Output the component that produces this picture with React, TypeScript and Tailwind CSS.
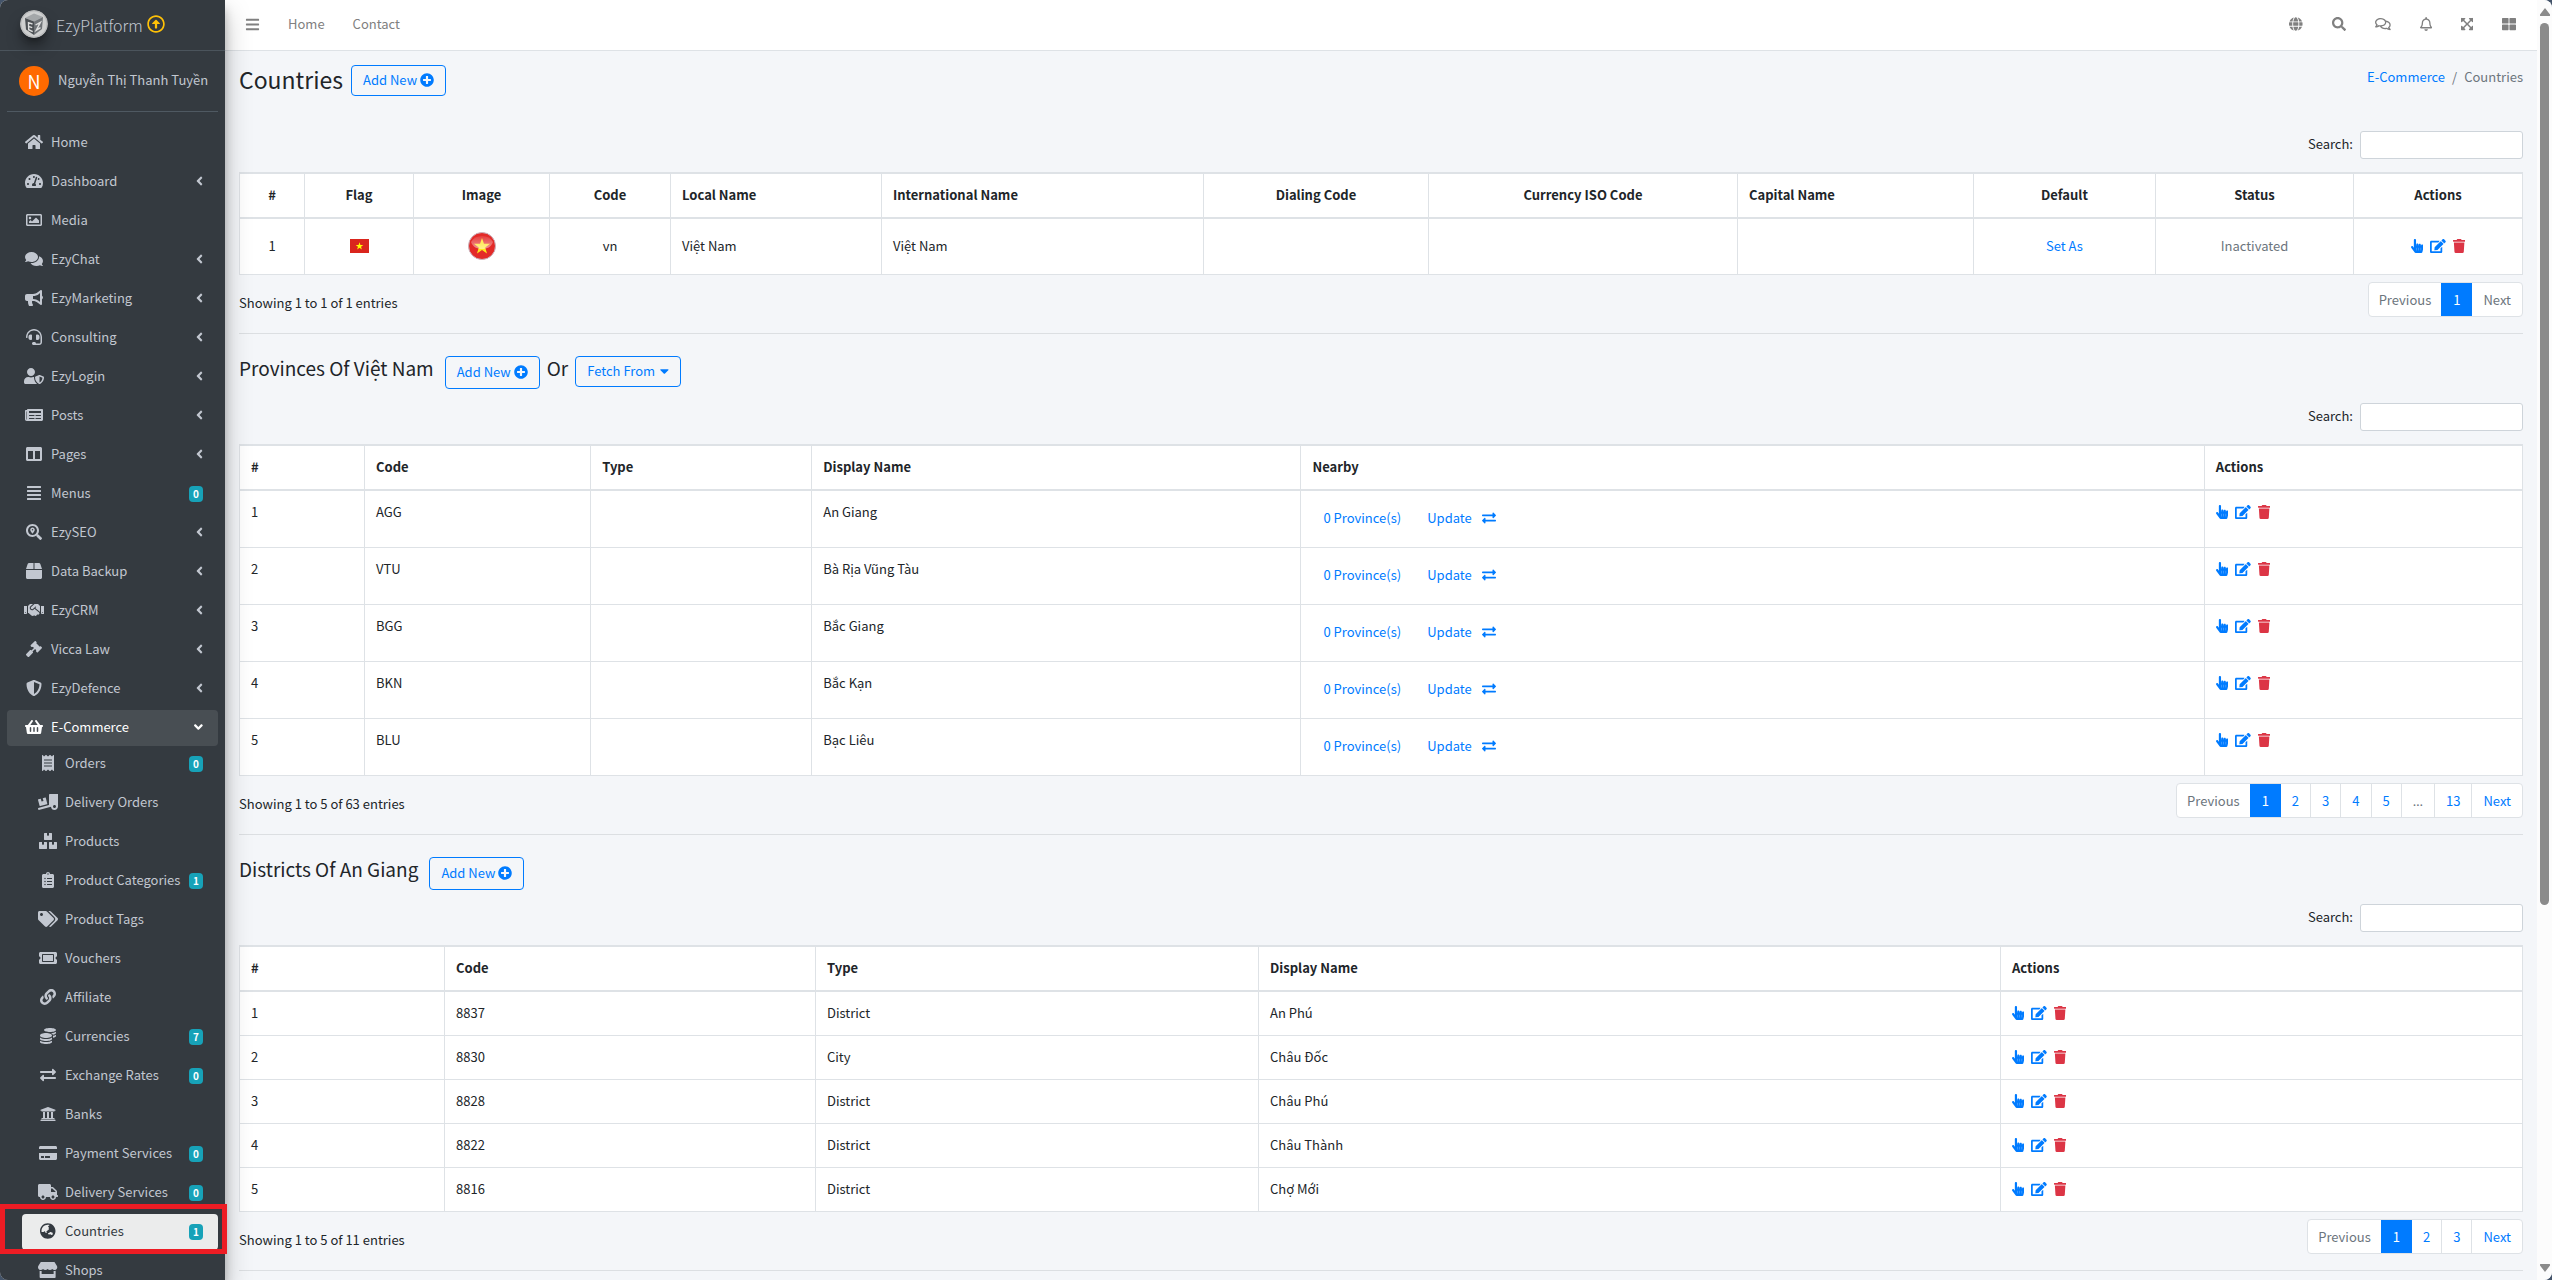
import { ReactNode } from "react";
import { IconType } from "react-icons";
import {
  FaAlignJustify,
  FaAngleDown,
  FaAngleLeft,
  FaBars,
  FaBox,
  FaBoxes,
  FaBullhorn,
  FaCaretDown,
  FaClipboardList,
  FaCoins,
  FaColumns,
  FaComments,
  FaCreditCard,
  FaEdit,
  FaExchangeAlt,
  FaExpandArrowsAlt,
  FaGavel,
  FaGlobe,
  FaGlobeAsia,
  FaHandPointer,
  FaHandshake,
  FaHeadset,
  FaHome,
  FaLink,
  FaNewspaper,
  FaPlusCircle,
  FaReceipt,
  FaRegArrowAltCircleUp,
  FaRegBell,
  FaRegComments,
  FaRegImage,
  FaSearch,
  FaSearchLocation,
  FaShieldAlt,
  FaShoppingBasket,
  FaStore,
  FaTachometerAlt,
  FaTags,
  FaThLarge,
  FaTicketAlt,
  FaTrash,
  FaTruck,
  FaTruckLoading,
  FaUniversity,
  FaUserShield,
} from "react-icons/fa";

type MenuItem = {
  label: string;
  icon: IconType;
  badge?: number;
  tree?: boolean;
  active?: boolean;
};

const menu: MenuItem[] = [
  { label: "Home", icon: FaHome },
  { label: "Dashboard", icon: FaTachometerAlt, tree: true },
  { label: "Media", icon: FaRegImage },
  { label: "EzyChat", icon: FaComments, tree: true },
  { label: "EzyMarketing", icon: FaBullhorn, tree: true },
  { label: "Consulting", icon: FaHeadset, tree: true },
  { label: "EzyLogin", icon: FaUserShield, tree: true },
  { label: "Posts", icon: FaNewspaper, tree: true },
  { label: "Pages", icon: FaColumns, tree: true },
  { label: "Menus", icon: FaAlignJustify, badge: 0 },
  { label: "EzySEO", icon: FaSearchLocation, tree: true },
  { label: "Data Backup", icon: FaBox, tree: true },
  { label: "EzyCRM", icon: FaHandshake, tree: true },
  { label: "Vicca Law", icon: FaGavel, tree: true },
  { label: "EzyDefence", icon: FaShieldAlt, tree: true },
  { label: "E-Commerce", icon: FaShoppingBasket, tree: true, active: true },
];

const subMenu: MenuItem[] = [
  { label: "Orders", icon: FaReceipt, badge: 0 },
  { label: "Delivery Orders", icon: FaTruckLoading },
  { label: "Products", icon: FaBoxes },
  { label: "Product Categories", icon: FaClipboardList, badge: 1 },
  { label: "Product Tags", icon: FaTags },
  { label: "Vouchers", icon: FaTicketAlt },
  { label: "Affiliate", icon: FaLink },
  { label: "Currencies", icon: FaCoins, badge: 7 },
  { label: "Exchange Rates", icon: FaExchangeAlt, badge: 0 },
  { label: "Banks", icon: FaUniversity },
  { label: "Payment Services", icon: FaCreditCard, badge: 0 },
  { label: "Delivery Services", icon: FaTruck, badge: 0 },
  { label: "Countries", icon: FaGlobeAsia, badge: 1, active: true },
  { label: "Shops", icon: FaStore },
];

const provinces = [
  ["AGG", "An Giang"],
  ["VTU", "Bà Rịa Vũng Tàu"],
  ["BGG", "Bắc Giang"],
  ["BKN", "Bắc Kạn"],
  ["BLU", "Bạc Liêu"],
];

const districts = [
  ["8837", "District", "An Phú"],
  ["8830", "City", "Châu Đốc"],
  ["8828", "District", "Châu Phú"],
  ["8822", "District", "Châu Thành"],
  ["8816", "District", "Chợ Mới"],
];

// size="100%" lets the width follow each icon's own viewBox
const Fa = ({ icon: Icon, className = "h-3.5" }: { icon: IconType; className?: string }) => (
  <Icon size="100%" className={`w-auto shrink-0 ${className}`} />
);

const Badge = ({ value }: { value: number }) => (
  <span className="mt-0.5 flex h-4 w-[14px] items-center justify-center rounded bg-[#17a2b8] text-[10px] font-bold text-white">
    {value}
  </span>
);

const NavLink = ({ item }: { item: MenuItem }) => (
  <a
    href="#"
    className={`flex h-9 items-center rounded px-[15px] pb-0.5 ${
      item.active ? "bg-white/10 text-white" : ""
    }`}
  >
    <span className="flex w-6 justify-center">
      <Fa icon={item.icon} className="h-4" />
    </span>
    <span className="ml-[5px] flex-1">{item.label}</span>
    {item.tree && <Fa icon={item.active ? FaAngleDown : FaAngleLeft} />}
    {item.badge !== undefined && <Badge value={item.badge} />}
  </a>
);

const SubNavLink = ({ item }: { item: MenuItem }) => (
  <a
    href="#"
    className={`relative flex h-9 items-center rounded pr-[15px] pb-0.5 pl-[14px] ${
      item.active ? "bg-[#ebecec] text-[#343a40]" : ""
    }`}
  >
    <span className="flex w-6 justify-center">
      <Fa icon={item.icon} className="h-4" />
    </span>
    <span className="ml-[5px] flex-1 whitespace-nowrap">{item.label}</span>
    {item.badge !== undefined && <Badge value={item.badge} />}
    {item.active && (
      <span className="pointer-events-none absolute -top-2.5 -right-[9px] -bottom-1 -left-[22px] z-10 border-[5px] border-[#ed1c24]" />
    )}
  </a>
);

const Logo = () => (
  <svg viewBox="0 0 28 28" className="size-7 rounded-full shadow-lg shadow-black/50">
    <circle cx="14" cy="14" r="14" fill="#b9babb" />
    <circle cx="14" cy="14" r="12.500" fill="#cfd0d0" />
    <path d="m5 8 9-4.500L23 7l-9 4.500z" fill="#a4a7a9" />
    <path d="m5 8 9 3.500V25l-8-5.500z" fill="#4b4f53" />
    <path d="m14 11.500 9-4.500-1 12-8 6z" fill="#6f7377" />
    <path
      d="m12.500 14-4-1.300.2 7 4 2M8.600 16.300l3.600 1.300M15.500 15l5-2.700-4.300 8 4.300-2.600"
      fill="none"
      stroke="#dcdddd"
      strokeWidth="1.400"
    />
  </svg>
);

const Sidebar = () => (
  <aside className="relative z-10 w-[225px] shrink-0 bg-[#343a40] text-[#c2c7d0] shadow-[0_13px_25px_rgba(0,0,0,0.25),0_9px_9px_rgba(0,0,0,0.22)]">
    <a
      href="#"
      className="flex h-[51px] items-center border-b border-[#4b545c] pb-0.5 pl-5 text-base"
    >
      <Logo />
      <span className="mt-0.5 ml-2 font-light">EzyPlatform</span>
      <FaRegArrowAltCircleUp size={18} className="ml-1 text-[#ffc107]" />
    </a>
    <div className="mx-[7px] flex h-[61px] items-center border-b border-[#4f5962] pl-3">
      <span className="flex size-[30px] items-center justify-center rounded-full bg-[#ff6a00] text-lg text-white">
        N
      </span>
      <a href="#" className="ml-[9px] pb-0.5 whitespace-nowrap">
        Nguyễn Thị Thanh Tuyền
      </a>
    </div>
    <nav className="mx-[7px] mt-[13px]">
      <ul className="flex flex-col gap-[3px]">
        {menu.map((item) => (
          <li key={item.label}>
            <NavLink item={item} />
          </li>
        ))}
      </ul>
      <ul className="ml-[15px] flex flex-col gap-[3px]">
        {subMenu.map((item) => (
          <li key={item.label}>
            <SubNavLink item={item} />
          </li>
        ))}
      </ul>
    </nav>
  </aside>
);

const Navbar = () => (
  <header className="flex h-[51px] shrink-0 items-center border-b border-[#dee2e6] bg-white pr-[21px] pb-0.5 pl-5 text-[#808080]">
    <button aria-label="Toggle menu">
      <FaBars size={15} />
    </button>
    <a href="#" className="ml-7">
      Home
    </a>
    <a href="#" className="ml-7">
      Contact
    </a>
    <div className="ml-auto flex items-center gap-[29px]">
      <button aria-label="Language">
        <Fa icon={FaGlobe} />
      </button>
      <button aria-label="Search">
        <Fa icon={FaSearch} />
      </button>
      <button aria-label="Messages">
        <Fa icon={FaRegComments} />
      </button>
      <button aria-label="Notifications">
        <Fa icon={FaRegBell} />
      </button>
      <button aria-label="Full screen">
        <Fa icon={FaExpandArrowsAlt} />
      </button>
      <button aria-label="Apps">
        <Fa icon={FaThLarge} />
      </button>
    </div>
  </header>
);

const OutlineButton = ({ children, tall }: { children: ReactNode; tall?: boolean }) => (
  <button
    className={`flex items-center gap-[3px] rounded border border-[#007bff] px-[11px] pb-0.5 text-[13px] text-[#007bff] ${
      tall ? "h-[33px]" : "h-[31px]"
    }`}
  >
    {children}
  </button>
);

const SearchBox = ({ id }: { id: string }) => (
  <div className="flex items-center justify-end gap-[7px]">
    <label htmlFor={id} className="pb-0.5">
      Search:
    </label>
    <input
      id={id}
      type="search"
      className="h-7 w-[163px] rounded-[3px] border border-[#ced4da] bg-white px-2"
    />
  </div>
);

const Cell = ({ children, center }: { children?: ReactNode; center?: boolean }) => (
  <td
    className={`border-r border-b border-[#dee2e6] px-[11px] ${
      center ? "pb-0.5 text-center align-middle" : "pt-2.5 align-top"
    }`}
  >
    {children}
  </td>
);

type Column = { label: string; width: number; center?: boolean };

const DataTable = ({ columns, children }: { columns: Column[]; children: ReactNode }) => {
  const total = columns.reduce((sum, c) => sum + c.width, 0);
  return (
    <table className="mt-[13px] w-full table-fixed border-separate border-spacing-0 border-t-2 border-l border-[#dee2e6] bg-white">
      <thead>
        <tr className="h-[45px]">
          {columns.map((c) => (
            <th
              key={c.label}
              style={{ width: `${(c.width / total) * 100}%` }}
              className={`border-r border-b-2 border-[#dee2e6] px-[11px] pb-0.5 font-bold ${
                c.center ? "text-center" : "text-left"
              }`}
            >
              {c.label}
            </th>
          ))}
        </tr>
      </thead>
      <tbody>{children}</tbody>
    </table>
  );
};

const Actions = ({ center }: { center?: boolean }) => (
  <div className={`flex h-[22px] items-center gap-[7px] text-[#007bff] ${center ? "justify-center" : ""}`}>
    <button aria-label="Select">
      <Fa icon={FaHandPointer} />
    </button>
    <button aria-label="Edit">
      <Fa icon={FaEdit} />
    </button>
    <button aria-label="Delete" className="text-[#dc3545]">
      <Fa icon={FaTrash} />
    </button>
  </div>
);

const TableFooter = ({
  info,
  pages,
  nextDisabled,
}: {
  info: string;
  pages: string[];
  nextDisabled?: boolean;
}) => (
  <div className="mt-[7px] flex items-start justify-between border-b border-[#dcdfe2] pb-4">
    <p className="mt-2.5">{info}</p>
    <div className="flex h-[35px] overflow-hidden rounded border border-[#dee2e6] bg-white text-[#007bff]">
      <button className="px-2.5 text-[#6c757d]">Previous</button>
      {pages.map((p, i) => (
        <button
          key={p}
          className={
            i === 0
              ? "-my-px bg-[#007bff] px-3 text-white"
              : `border-r border-[#dee2e6] px-[11px] ${
                  p === "…" ? "font-['Noto_Sans',sans-serif] text-[#6c757d]" : ""
                }`
          }
        >
          {p}
        </button>
      ))}
      <button className={`px-[11px] ${nextDisabled ? "text-[#6c757d]" : ""}`}>Next</button>
    </div>
  </div>
);

const Scrollbar = () => (
  <div className="flex w-[15px] shrink-0 flex-col items-center justify-between bg-[#fcfcfc] py-2 text-[#8b8b8b]">
    <svg viewBox="0 0 10 8" className="h-2 w-2.5 fill-current">
      <path d="M5 0 10 6.500a.9.900 0 0 1-.7 1.500H.7A.9.900 0 0 1 0 6.500z" />
    </svg>
    <div className="my-[7px] flex w-[9px] flex-1 flex-col">
      <div className="h-[71.500%] rounded-full bg-[#8b8b8b]" />
    </div>
    <svg viewBox="0 0 10 8" className="h-2 w-2.5 fill-current">
      <path d="M5 8 0 1.500A.9.900 0 0 1 .7 0h8.600A.9.900 0 0 1 10 1.500z" />
    </svg>
  </div>
);

const countryColumns: Column[] = [
  { label: "#", width: 65, center: true },
  { label: "Flag", width: 109, center: true },
  { label: "Image", width: 136, center: true },
  { label: "Code", width: 121, center: true },
  { label: "Local Name", width: 211 },
  { label: "International Name", width: 322 },
  { label: "Dialing Code", width: 225, center: true },
  { label: "Currency ISO Code", width: 309, center: true },
  { label: "Capital Name", width: 236 },
  { label: "Default", width: 182, center: true },
  { label: "Status", width: 198, center: true },
  { label: "Actions", width: 169, center: true },
];

const provinceColumns: Column[] = [
  { label: "#", width: 125 },
  { label: "Code", width: 226 },
  { label: "Type", width: 221 },
  { label: "Display Name", width: 489 },
  { label: "Nearby", width: 903 },
  { label: "Actions", width: 318 },
];

const districtColumns: Column[] = [
  { label: "#", width: 205 },
  { label: "Code", width: 371 },
  { label: "Type", width: 443 },
  { label: "Display Name", width: 742 },
  { label: "Actions", width: 522 },
];

const star = "M0-10 2.300-3.200 9.500-3.100 3.800 1.200 5.900 8.100 0 4-5.900 8.100-3.800 1.200-9.500-3.100-2.300-3.200z";

const Flag = () => (
  <svg viewBox="0 0 19 14" className="mx-auto block h-3.5 w-[19px]">
    <path d="M0 0h19v14H0z" fill="#da251d" />
    <path d={star} fill="#ff0" transform="translate(9.500 7.200) scale(.4)" />
  </svg>
);

const RoundFlag = () => (
  <svg viewBox="0 0 28 28" className="mx-auto block size-7">
    <defs>
      <linearGradient id="gloss" x1="0" y1="0" x2="0" y2="1">
        <stop offset="0" stopColor="#fff" stopOpacity="0.1" />
        <stop offset="1" stopColor="#fff" stopOpacity="0.5" />
      </linearGradient>
    </defs>
    <circle cx="14" cy="14" r="13.500" fill="#e32a28" stroke="#c9b3bd" />
    <path d={star} fill="#ffe51a" transform="translate(14 14.500) scale(.85)" />
    <path d="M3 10a12 10 0 0 1 22 0c-2 5-6 7-11 7S5 15 3 10z" fill="url(#gloss)" />
  </svg>
);

export default function App() {
  return (
    <div className="h-screen bg-[#44546a] font-['Noto_Sans_CJK_SC','Noto_Sans',sans-serif] text-[13px] leading-[22px] text-[#212529]">
      <div className="flex h-full overflow-hidden rounded-lg bg-[#f4f6f9]">
        <Sidebar />
        <div className="flex min-w-0 flex-1 flex-col">
          <Navbar />
          <main className="px-3.5">
            <div className="flex items-start justify-between pt-3.5">
              <div className="flex items-start gap-2">
                <h1 className="text-[23px] leading-[29px]">Countries</h1>
                <OutlineButton>
                  Add New <FaPlusCircle size={14} />
                </OutlineButton>
              </div>
              <nav className="mt-px flex gap-[7px] text-[#6c757d]">
                <a href="#" className="text-[#007bff]">
                  E-Commerce
                </a>
                <span>/</span>
                <span>Countries</span>
              </nav>
            </div>

            <section className="pt-[35px]">
              <SearchBox id="country-search" />
              <DataTable columns={countryColumns}>
                <tr className="h-14">
                  <Cell center>1</Cell>
                  <Cell center>
                    <Flag />
                  </Cell>
                  <Cell center>
                    <RoundFlag />
                  </Cell>
                  <Cell center>vn</Cell>
                  <td className="border-r border-b border-[#dee2e6] px-[11px] pb-0.5">Việt Nam</td>
                  <td className="border-r border-b border-[#dee2e6] px-[11px] pb-0.5">Việt Nam</td>
                  <Cell />
                  <Cell />
                  <Cell />
                  <Cell center>
                    <a href="#" className="text-[#007bff]">
                      Set As
                    </a>
                  </Cell>
                  <Cell center>
                    <span className="text-[#6c757d]">Inactivated</span>
                  </Cell>
                  <Cell center>
                    <Actions center />
                  </Cell>
                </tr>
              </DataTable>
              <TableFooter info="Showing 1 to 1 of 1 entries" pages={["1"]} nextDisabled />
            </section>

            <section className="pt-[22px]">
              <div className="mb-3.5 flex items-start gap-[7px] text-[19px] leading-6">
                <h2 className="mr-1">Provinces Of Việt Nam</h2>
                <OutlineButton tall>
                  Add New <FaPlusCircle size={14} />
                </OutlineButton>
                <span>Or</span>
                <OutlineButton>
                  Fetch From
                  <span className="ml-0.5">
                    <Fa icon={FaCaretDown} />
                  </span>
                </OutlineButton>
              </div>
              <SearchBox id="province-search" />
              <DataTable columns={provinceColumns}>
                {provinces.map(([code, name], i) => (
                  <tr key={code} className="h-[57px]">
                    <Cell>{i + 1}</Cell>
                    <Cell>{code}</Cell>
                    <Cell />
                    <Cell>{name}</Cell>
                    <Cell>
                      <div className="flex gap-[26px] pt-1.5 pl-[11px] text-[#007bff]">
                        <a href="#">0 Province(s)</a>
                        <a href="#" className="flex items-center gap-2.5">
                          Update <FaExchangeAlt size={14} />
                        </a>
                      </div>
                    </Cell>
                    <Cell>
                      <Actions />
                    </Cell>
                  </tr>
                ))}
              </DataTable>
              <TableFooter
                info="Showing 1 to 5 of 63 entries"
                pages={["1", "2", "3", "4", "5", "…", "13"]}
              />
            </section>

            <section className="pt-[22px]">
              <div className="mb-3.5 flex items-start gap-[7px] text-[19px] leading-6">
                <h2 className="mr-1">Districts Of An Giang</h2>
                <OutlineButton tall>
                  Add New <FaPlusCircle size={14} />
                </OutlineButton>
              </div>
              <SearchBox id="district-search" />
              <DataTable columns={districtColumns}>
                {districts.map(([code, type, name], i) => (
                  <tr key={code} className="h-11">
                    <Cell>{i + 1}</Cell>
                    <Cell>{code}</Cell>
                    <Cell>{type}</Cell>
                    <Cell>{name}</Cell>
                    <Cell>
                      <Actions />
                    </Cell>
                  </tr>
                ))}
              </DataTable>
              <TableFooter info="Showing 1 to 5 of 11 entries" pages={["1", "2", "3"]} />
            </section>
          </main>
        </div>
        <Scrollbar />
      </div>
    </div>
  );
}
